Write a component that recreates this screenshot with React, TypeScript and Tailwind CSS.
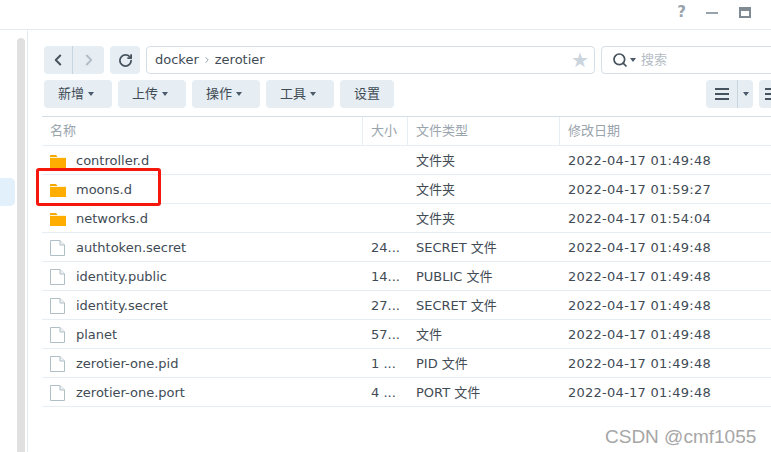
import { ChevronLeft, ChevronRight, RotateCw, Search } from 'lucide-react'

const files = [
  { name: 'controller.d', size: '', type: '文件夹', date: '2022-04-17 01:49:48', folder: true },
  { name: 'moons.d', size: '', type: '文件夹', date: '2022-04-17 01:59:27', folder: true },
  { name: 'networks.d', size: '', type: '文件夹', date: '2022-04-17 01:54:04', folder: true },
  { name: 'authtoken.secret', size: '24...', type: 'SECRET 文件', date: '2022-04-17 01:49:48' },
  { name: 'identity.public', size: '14...', type: 'PUBLIC 文件', date: '2022-04-17 01:49:48' },
  { name: 'identity.secret', size: '27...', type: 'SECRET 文件', date: '2022-04-17 01:49:48' },
  { name: 'planet', size: '57...', type: '文件', date: '2022-04-17 01:49:48' },
  { name: 'zerotier-one.pid', size: '1 ...', type: 'PID 文件', date: '2022-04-17 01:49:48' },
  { name: 'zerotier-one.port', size: '4 ...', type: 'PORT 文件', date: '2022-04-17 01:49:48' },
]

const actions = ['新增', '上传', '操作', '工具']

function Caret() {
  return <span className="inline-block border-x-[3.5px] border-t-[4px] border-x-transparent border-t-[#4a5a6a]" />
}

function FolderIcon() {
  return (
    <svg width="16" height="14" viewBox="0 0 16 14" className="shrink-0">
      <path d="M0 1.5A.5.5 0 0 1 .5 1H6l1.5 2H0z" fill="#f5a800" />
      <path d="M0 3.5h16V14H0z" fill="#ffae00" />
      <path d="M0 3h16v1H0z" fill="#ffffff" opacity=".7" />
    </svg>
  )
}

function FileIcon() {
  return (
    <svg width="15" height="16" viewBox="0 0 15 16" className="shrink-0">
      <path d="M.5.5h9.500l4.500 4.500v10.500H.5z" fill="#fff" stroke="#b0bec5" />
      <path d="M10 .5V5h4.500" fill="#eef2f5" stroke="#b0bec5" />
    </svg>
  )
}

export default function App() {
  return (
    <div className="relative h-[452px] w-[771px] overflow-hidden bg-white font-['DejaVu_Sans','Noto_Sans_CJK_SC',sans-serif] text-[13px] text-[#414b55]">
      {/* Window controls */}
      <div className="flex h-[30px] items-center justify-end border-b border-[#e3eaf0] pb-1">
        <span className="mr-[20px] text-[15px] font-bold text-[#98a2ab]">?</span>
        <span className="mr-[21px] h-[2px] w-[12px] bg-[#98a2ab]" />
        <span className="mr-[20px] h-[11px] w-[12px] border-[2px] border-t-[4px] border-[#7f8a94]" />
      </div>

      <div className="flex">
        {/* Sidebar */}
        <div className="flex h-[422px] w-[28px] shrink-0 border-r border-[#e3eaf0] pt-[8px]">
          <div className="mt-[140px] h-[28px] w-[15px] shrink-0 rounded-r-[5px] bg-[#e1f0fb]" />
          <div className="ml-[2px] h-[420px] w-[8px] shrink-0 rounded-t-[4px] bg-[#e0e0e0]" />
        </div>

        {/* Main panel */}
        <div className="min-w-0 flex-1 pl-[14px] pt-[16px]">
          <div className="flex flex-col gap-[6px] pl-[2px]">
            <div className="flex h-[28px] gap-[6px]">
              <div className="flex w-[60px] shrink-0 items-center rounded-[4px] bg-[#e6edf3]">
                <div className="flex h-full w-[29px] items-center justify-center border-r border-[#c8d4de]">
                  <ChevronLeft size={18} strokeWidth={2.6} className="text-[#46535f]" />
                </div>
                <div className="flex h-full flex-1 items-center justify-center">
                  <ChevronRight size={18} strokeWidth={2.6} className="text-[#b4bec8]" />
                </div>
              </div>
              <div className="flex w-[30px] shrink-0 items-center justify-center rounded-[4px] bg-[#e6edf3]">
                <RotateCw size={15} strokeWidth={2.8} className="text-[#46535f]" />
              </div>
              <div className="flex w-[449px] shrink-0 items-center justify-between rounded-[4px] border border-[#d3dee6] pl-[8px] pr-[5px]">
                <div className="flex items-center gap-[3px]">
                  <span>docker</span>
                  <ChevronRight size={10} strokeWidth={2} className="text-[#7f8a94]" />
                  <span>zerotier</span>
                </div>
                <span className="text-[20px] leading-none text-[#cbd5dd]">★</span>
              </div>
              <div className="flex w-[200px] shrink-0 items-center rounded-[4px] border border-[#d3dee6] pl-[10px]">
                <Search size={16} strokeWidth={2.6} className="text-[#46535f]" />
                <span className="ml-[2px] flex"><Caret /></span>
                <span className="ml-[5px] text-[#b4bcc4]">搜索</span>
              </div>
            </div>

            <div className="flex h-[28px] gap-[6px]">
              {actions.map((label) => (
                <div key={label} className="flex w-[68px] shrink-0 items-center gap-[4px] rounded-[4px] bg-[#e6edf3] pl-[14px]">
                  <span>{label}</span>
                  <Caret />
                </div>
              ))}
              <div className="flex w-[54px] shrink-0 items-center justify-center rounded-[4px] bg-[#e6edf3]">设置</div>
              <div className="ml-[306px] flex w-[47px] shrink-0 items-center rounded-[4px] bg-[#e6edf3]">
                <div className="flex h-full w-[32px] flex-col items-center justify-center gap-[3px] border-r border-[#c8d4de]">
                  <span className="h-[2px] w-[14px] bg-[#46535f]" />
                  <span className="h-[2px] w-[14px] bg-[#46535f]" />
                  <span className="h-[2px] w-[14px] bg-[#46535f]" />
                </div>
                <div className="flex flex-1 justify-center"><Caret /></div>
              </div>
              <div className="flex w-[30px] shrink-0 flex-col items-start justify-center gap-[3px] rounded-[4px] bg-[#e6edf3] pl-[6px]">
                <span className="h-[2px] w-[14px] bg-[#46535f]" />
                <span className="h-[2px] w-[14px] bg-[#46535f]" />
                <span className="h-[2px] w-[14px] bg-[#46535f]" />
              </div>
            </div>
          </div>

          {/* File table */}
          <div className="mt-[8px]">
            <div className="flex h-[30px] items-center border-y border-t-[#d3dee6] border-b-[#e6edf3] text-[#9aa4ad]">
              <div className="h-full w-[320px] shrink-0 pl-[8px] leading-[28px]">名称</div>
              <div className="h-full w-[45px] shrink-0 border-l border-[#e6edf3] pl-[8px] leading-[28px]">大小</div>
              <div className="h-full w-[152px] shrink-0 border-l border-[#e6edf3] pl-[8px] leading-[28px]">文件类型</div>
              <div className="h-full flex-1 border-l border-[#e6edf3] pl-[8px] leading-[28px]">修改日期</div>
            </div>
            {files.map((f) => (
              <div key={f.name} className="flex h-[29px] items-center border-b border-[#e6edf3] pt-[2px]">
                <div className="flex w-[320px] shrink-0 items-center pl-[8px]">
                  <span className="flex w-[26px] shrink-0">{f.folder ? <FolderIcon /> : <FileIcon />}</span>
                  <span>{f.name}</span>
                </div>
                <div className="w-[45px] shrink-0 pl-[9px]">{f.size}</div>
                <div className="w-[152px] shrink-0 pl-[9px]">{f.type}</div>
                <div className="flex-1 pl-[9px] tracking-[0.26px]">{f.date}</div>
              </div>
            ))}
          </div>
        </div>
      </div>

      {/* Red annotation box */}
      <div className="absolute left-[36px] top-[168px] h-[38px] w-[125px] rounded-[3px] border-[3px] border-[#f5160c]" />

      {/* Watermark */}
      <div className="absolute left-[605px] top-[423px] font-['Liberation_Sans',sans-serif] text-[19px] text-[#a6a6a6]">CSDN @cmf1055</div>
    </div>
  )
}
